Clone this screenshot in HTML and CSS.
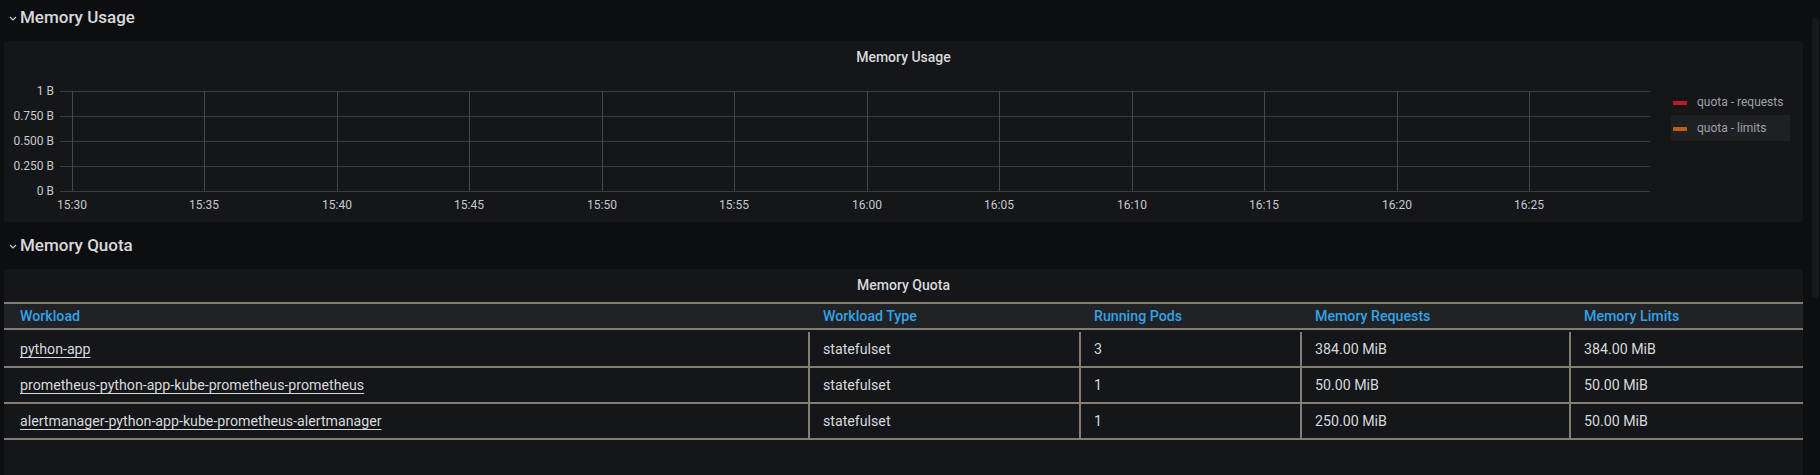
FILE: index.html
```html
<!DOCTYPE html>
<html>
<head>
<meta charset="utf-8">
<link rel="stylesheet" href="styles.css">
</head>
<body>
<div class="page">
  <div class="row-title">
    <svg class="chev" width="8" height="5" viewBox="0 0 8 5"><polyline points="1,1 4,4 7,1" fill="none" stroke="#c7c9cc" stroke-width="1.2"/></svg>
    <span>Memory Usage</span>
  </div>
  <div class="panel graph-panel">
    <div class="panel-title">Memory Usage</div>
    <div class="graph-body">
      <svg class="plot" width="1650" height="149" viewBox="0 0 1650 149">
        <g class="grid" shape-rendering="crispEdges">
          <line x1="56" y1="18.5" x2="1646" y2="18.5"/>
          <line x1="56" y1="43.5" x2="1646" y2="43.5"/>
          <line x1="56" y1="68.5" x2="1646" y2="68.5"/>
          <line x1="56" y1="93.5" x2="1646" y2="93.5"/>
          <line x1="56" y1="118.5" x2="1646" y2="118.5"/>
        </g>
        <g class="vgrid" shape-rendering="crispEdges">
          <line x1="68.5" y1="18" x2="68.5" y2="118"/>
          <line x1="200.5" y1="18" x2="200.5" y2="118"/>
          <line x1="333.5" y1="18" x2="333.5" y2="118"/>
          <line x1="465.5" y1="18" x2="465.5" y2="118"/>
          <line x1="598.5" y1="18" x2="598.5" y2="118"/>
          <line x1="730.5" y1="18" x2="730.5" y2="118"/>
          <line x1="863.5" y1="18" x2="863.5" y2="118"/>
          <line x1="995.5" y1="18" x2="995.5" y2="118"/>
          <line x1="1128.5" y1="18" x2="1128.5" y2="118"/>
          <line x1="1260.5" y1="18" x2="1260.5" y2="118"/>
          <line x1="1393.5" y1="18" x2="1393.5" y2="118"/>
          <line x1="1525.5" y1="18" x2="1525.5" y2="118"/>
        </g>
        <g class="ylabels" text-anchor="end">
          <text x="50" y="22">1 B</text>
          <text x="50" y="47">0.750 B</text>
          <text x="50" y="72">0.500 B</text>
          <text x="50" y="97">0.250 B</text>
          <text x="50" y="122">0 B</text>
        </g>
        <g class="xlabels" text-anchor="middle">
          <text x="68" y="136">15:30</text>
          <text x="200" y="136">15:35</text>
          <text x="333" y="136">15:40</text>
          <text x="465" y="136">15:45</text>
          <text x="598" y="136">15:50</text>
          <text x="730" y="136">15:55</text>
          <text x="863" y="136">16:00</text>
          <text x="995" y="136">16:05</text>
          <text x="1128" y="136">16:10</text>
          <text x="1260" y="136">16:15</text>
          <text x="1393" y="136">16:20</text>
          <text x="1525" y="136">16:25</text>
        </g>
      </svg>
      <ul class="legend">
        <li class="legend-item"><span class="swatch swatch-red"></span>quota - requests</li>
        <li class="legend-item legend-item-hover"><span class="swatch swatch-orange"></span>quota - limits</li>
      </ul>
    </div>
  </div>

  <div class="row-title row-title-second">
    <svg class="chev" width="8" height="5" viewBox="0 0 8 5"><polyline points="1,1 4,4 7,1" fill="none" stroke="#c7c9cc" stroke-width="1.2"/></svg>
    <span>Memory Quota</span>
  </div>
  <div class="panel table-panel">
    <div class="panel-title">Memory Quota</div>
    <div class="table">
      <div class="thead">
        <div class="th th-first">Workload</div>
        <div class="th">Workload Type</div>
        <div class="th">Running Pods</div>
        <div class="th">Memory Requests</div>
        <div class="th">Memory Limits</div>
      </div>
      <div class="tbody">
        <div class="tr">
          <div class="td td-first"><a class="link">python-app</a></div>
          <div class="td">statefulset</div>
          <div class="td">3</div>
          <div class="td">384.00 MiB</div>
          <div class="td">384.00 MiB</div>
        </div>
        <div class="tr">
          <div class="td td-first"><a class="link">prometheus-python-app-kube-prometheus-prometheus</a></div>
          <div class="td">statefulset</div>
          <div class="td">1</div>
          <div class="td">50.00 MiB</div>
          <div class="td">50.00 MiB</div>
        </div>
        <div class="tr">
          <div class="td td-first"><a class="link">alertmanager-python-app-kube-prometheus-alertmanager</a></div>
          <div class="td">statefulset</div>
          <div class="td">1</div>
          <div class="td">250.00 MiB</div>
          <div class="td">50.00 MiB</div>
        </div>
      </div>
    </div>
  </div>
</div>
<div class="scrollbar"></div>
</body>
</html>
```

FILE: styles.css
```css
html, body {
  margin: 0;
  padding: 0;
  background: #0d0e11;
  height: 475px;
  overflow: hidden;
}

body {
  font-family: Roboto, "Liberation Sans", Arial, sans-serif;
  color: #d8d9da;
  position: relative;
}

.page {
  width: 1799px;
  padding: 0 4px;
  display: flex;
  flex-direction: column;
}

.row-title {
  height: 34px;
  display: flex;
  align-items: center;
  font-size: 17px;
  font-weight: 500;
  color: #d8d9da;
  margin-bottom: 7px;
}

.row-title-second {
  margin-top: 6px;
  margin-bottom: 7px;
}

.chev {
  margin-left: 5px;
  margin-right: 3px;
  margin-top: 2px;
  display: block;
}

.panel {
  background: #141619;
  border-radius: 3px;
  width: 1799px;
}

.panel-title {
  height: 32px;
  display: flex;
  align-items: center;
  justify-content: center;
  font-size: 14px;
  font-weight: 500;
  color: #d8d9da;
}

.graph-panel {
  height: 181px;
}

.graph-body {
  display: flex;
  height: 149px;
}

.plot {
  display: block;
  flex: none;
}

.grid line {
  stroke: #3a3c40;
  stroke-width: 1;
}

.vgrid line {
  stroke: #45474b;
  stroke-width: 1;
}

.ylabels text, .xlabels text {
  font-family: Roboto, "Liberation Sans", Arial, sans-serif;
  font-size: 12px;
  fill: #c7c9cc;
}

.legend {
  list-style: none;
  margin: 16px 0 0 17px;
  padding: 0;
  display: flex;
  flex-direction: column;
}

.legend-item {
  width: 119px;
  height: 26px;
  display: flex;
  align-items: center;
  font-size: 12px;
  color: #9fa1a5;
  box-sizing: border-box;
  padding-left: 2px;
}

.legend-item-hover {
  background: #1f2023;
}

.swatch {
  width: 14px;
  height: 4px;
  margin-right: 10px;
  margin-top: 1px;
  flex: none;
}

.swatch-red {
  background: #c4162a;
}

.swatch-orange {
  background: #c15c17;
}

.table-panel {
  height: 206px;
  border-radius: 3px 3px 0 0;
}

.table {
  margin-top: 1px;
}

.thead, .tr {
  display: grid;
  grid-template-columns: 804px 271px 221px 269px 234px;
}

.thead {
  background: #202226;
  border-top: 2px solid #857e70;
  border-bottom: 2px solid #857e70;
  height: 24px;
  margin-bottom: 2px;
}

.th {
  font-size: 14.2px;
  font-weight: 500;
  color: #33a2e5;
  padding-left: 15px;
  display: flex;
  align-items: center;
}

.th-first {
  padding-left: 16px;
}

.tr {
  border-bottom: 2px solid #857e70;
  height: 34px;
}

.td {
  font-size: 14.2px;
  color: #d8d9da;
  border-left: 2px solid #857e70;
  padding-left: 13px;
  display: flex;
  align-items: center;
  white-space: nowrap;
}

.td-first {
  border-left: none;
  padding-left: 16px;
}

.link {
  color: #d8d9da;
  text-decoration: underline;
  text-underline-offset: 3px;
  text-decoration-thickness: 1px;
}

.scrollbar {
  position: absolute;
  top: 18px;
  left: 1812px;
  width: 7px;
  height: 280px;
  background: #17181b;
  border-radius: 4px;
}
```
